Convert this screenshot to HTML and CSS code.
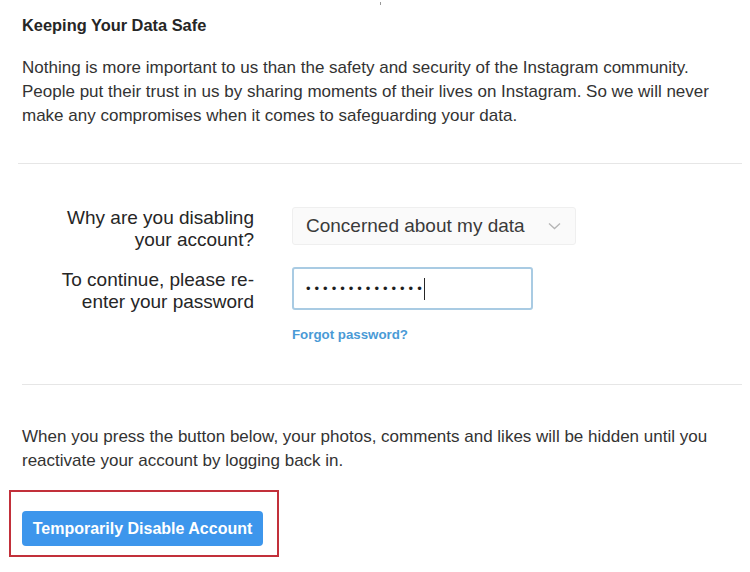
FILE: index.html
```html
<!DOCTYPE html>
<html lang="en">
<head>
    <meta charset="UTF-8">
    <meta name="viewport" content="width=device-width, initial-scale=1.0">
    <title>Temporarily Disable Account</title>
    <link rel="stylesheet" href="styles.css">
</head>
<body>
    <div class="page">
        <span class="tick"></span>
        <section class="intro">
            <h2>Keeping Your Data Safe</h2>
            <p>Nothing is more important to us than the safety and security of the Instagram community. People put their trust in us by sharing moments of their lives on Instagram. So we will never make any compromises when it comes to safeguarding your data.</p>
        </section>

        <form class="disable-form">
            <label class="field-label" for="reason">Why are you disabling your account?</label>
            <div class="select-box" id="reason">
                <span>Concerned about my data</span>
                <svg class="chevron" width="13" height="8" viewBox="0 0 13 8"><path d="M1 1.5 L6.5 6.5 L12 1.5" fill="none" stroke="#b5b5b5" stroke-width="1.3"/></svg>
            </div>

            <label class="field-label second" for="password">To continue, please re-enter your password</label>
            <div class="control">
                <div class="password-box" id="password">
                    <span class="dots">&bull;&bull;&bull;&bull;&bull;&bull;&bull;&bull;&bull;&bull;&bull;&bull;&bull;&bull;</span><span class="caret"></span>
                </div>
                <a class="forgot" href="#">Forgot password?</a>
            </div>
        </form>

        <section class="outro">
            <p>When you press the button below, your photos, comments and likes will be hidden until you reactivate your account by logging back in.</p>
            <div class="highlight">
                <button class="disable-btn" type="button">Temporarily Disable Account</button>
            </div>
        </section>
    </div>
</body>
</html>
```

FILE: styles.css
```css
body {
    font-family: "Liberation Sans", Arial, sans-serif;
    margin: 0;
    padding: 0;
    background-color: #fff;
    color: #262626;
}

.page {
    padding: 0 8px 0 22px;
    position: relative;
}

.tick {
    position: absolute;
    left: 380px;
    top: 2px;
    width: 1px;
    height: 3px;
    background-color: #999;
}

.intro {
    padding: 15px 0 35px 4px;
    margin-left: -4px;
    border-bottom: 1px solid #e6e6e6;
}

h2 {
    font-size: 16.4px;
    line-height: 20px;
    margin: 0 0 21px;
}

p {
    font-size: 17px;
    line-height: 24px;
    margin: 0;
    color: #333;
}

.disable-form {
    display: grid;
    grid-template-columns: 200px auto;
    column-gap: 38px;
    row-gap: 16px;
    align-items: start;
    padding: 43px 0 41px 32px;
    border-bottom: 1px solid #e6e6e6;
}

.field-label {
    text-align: right;
    font-size: 19px;
    line-height: 22px;
}

.field-label.second {
    padding-top: 2px;
}

.select-box {
    width: 284px;
    height: 38px;
    box-sizing: border-box;
    display: flex;
    align-items: center;
    justify-content: space-between;
    padding: 0 14px 0 13px;
    background-color: #fafafa;
    border: 1px solid #efefef;
    border-radius: 3px;
    font-size: 19px;
    color: #3a3a3a;
}

.control {
    display: flex;
    flex-direction: column;
    align-items: flex-start;
}

.password-box {
    width: 241px;
    height: 43px;
    box-sizing: border-box;
    display: flex;
    align-items: center;
    padding: 0 12px;
    border: 2px solid #a9cbe3;
    border-radius: 3px;
}

.dots {
    font-size: 13px;
    letter-spacing: 4px;
    color: #1e1e1e;
}

.caret {
    display: inline-block;
    width: 1px;
    height: 22px;
    background-color: #262626;
    margin-left: -2px;
}

.forgot {
    margin-top: 17px;
    font-size: 13.3px;
    line-height: 16px;
    font-weight: bold;
    color: #4a9ad6;
    text-decoration: none;
}

.outro {
    padding-top: 40px;
}

.highlight {
    display: inline-block;
    margin: 17px 0 0 -13px;
    padding: 19px 14px 9px 11px;
    border: 2px solid #c2303a;
}

.disable-btn {
    display: block;
    width: 241px;
    height: 35px;
    background-color: #3d96ec;
    border: none;
    border-radius: 4px;
    color: #fff;
    font-family: inherit;
    font-size: 16px;
    font-weight: bold;
    padding: 0;
}
```
